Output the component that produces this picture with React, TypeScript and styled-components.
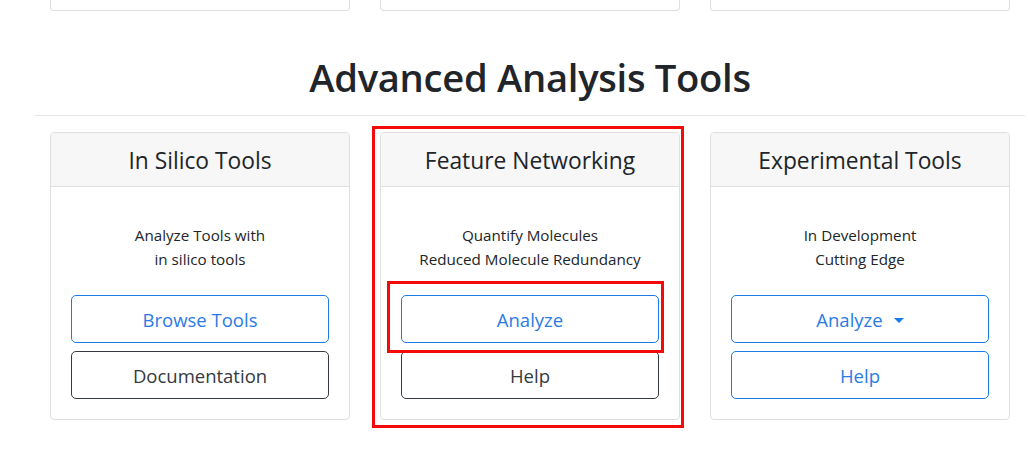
import React from "react";
import styled, { createGlobalStyle, css } from "styled-components";

const Global = createGlobalStyle`
  html, body { margin: 0; padding: 0; background: #fff; }
  body {
    font-family: "Open Sans", "Noto Sans", "Liberation Sans", sans-serif;
    color: #212529;
    -webkit-font-smoothing: antialiased;
  }
  * { box-sizing: border-box; }
`;

const Page = styled.div`
  width: 1028px;
  height: 451px;
  overflow: hidden;
  position: relative;
`;

const Container = styled.div`
  width: 990px;
  margin-left: 35px;
`;

const Row = styled.div`
  display: grid;
  grid-template-columns: repeat(3, 300px);
  column-gap: 30px;
  padding: 0 15px;
`;

const StubCard = styled.div`
  height: 11px;
  border: 1px solid #dedede;
  border-top: none;
  border-radius: 0 0 4px 4px;
`;

const Title = styled.h2`
  margin: 42px 0 0;
  text-align: center;
  font-size: 38.2px;
  font-weight: 600;
  line-height: 48px;
  color: #212529;
  letter-spacing: -0.3px;
`;

const Rule = styled.hr`
  margin: 14px 0 16px;
  border: 0;
  border-top: 1px solid #e2e2e2;
`;

const CardWrap = styled.div`
  position: relative;
`;

const Card = styled.div`
  border: 1px solid #dfdfdf;
  border-radius: 4px;
  background: #fff;
  display: flex;
  flex-direction: column;
`;

const CardHeader = styled.div`
  height: 54px;
  padding-top: 2px;
  background: #f7f7f7;
  border-bottom: 1px solid #dfdfdf;
  border-radius: 3px 3px 0 0;
  display: flex;
  align-items: center;
  justify-content: center;
  font-size: 22.8px;
  font-weight: 400;
  color: #212529;
`;

const CardBody = styled.div`
  padding: 36px 20px 20px;
  display: flex;
  flex-direction: column;
  gap: 8px;
`;

const CardText = styled.p`
  margin: 0 0 16px;
  text-align: center;
  font-size: 15.2px;
  line-height: 24px;
  color: #212529;
`;

const Button = styled.button<{ $variant: "primary" | "dark" }>`
  height: 48px;
  width: 100%;
  border-radius: 5px;
  background: #fff;
  font-family: inherit;
  font-size: 18.5px;
  display: flex;
  align-items: center;
  justify-content: center;
  cursor: pointer;
  ${(p) =>
    p.$variant === "primary"
      ? css`
          border: 1px solid #1a7ae8;
          color: #2a7be4;
        `
      : css`
          border: 1px solid #343a40;
          color: #343a40;
        `}
`;

const Caret = styled.span`
  display: inline-block;
  margin-left: 11px;
  margin-top: 2px;
  border-top: 5px solid #1a7ae8;
  border-left: 5.5px solid transparent;
  border-right: 5.5px solid transparent;
`;

const Highlight = styled.div<{ $top: number; $left: number; $w: number; $h: number }>`
  position: absolute;
  top: ${(p) => p.$top}px;
  left: ${(p) => p.$left}px;
  width: ${(p) => p.$w}px;
  height: ${(p) => p.$h}px;
  border: 3.5px solid #f50a0a;
  pointer-events: none;
`;

type Tool = {
  title: string;
  lines: string[];
  primary: string;
  caret?: boolean;
  secondary: string;
  secondaryVariant: "primary" | "dark";
  highlight?: boolean;
};

const tools: Tool[] = [
  {
    title: "In Silico Tools",
    lines: ["Analyze Tools with", "in silico tools"],
    primary: "Browse Tools",
    secondary: "Documentation",
    secondaryVariant: "dark",
  },
  {
    title: "Feature Networking",
    lines: ["Quantify Molecules", "Reduced Molecule Redundancy"],
    primary: "Analyze",
    secondary: "Help",
    secondaryVariant: "dark",
    highlight: true,
  },
  {
    title: "Experimental Tools",
    lines: ["In Development", "Cutting Edge"],
    primary: "Analyze",
    caret: true,
    secondary: "Help",
    secondaryVariant: "primary",
  },
];

export default function App() {
  return (
    <Page>
      <Global />
      <Container>
        <Row>
          <StubCard />
          <StubCard />
          <StubCard />
        </Row>
        <Title>Advanced Analysis Tools</Title>
        <Rule />
        <Row>
          {tools.map((t) => (
            <CardWrap key={t.title}>
              <Card>
                <CardHeader>{t.title}</CardHeader>
                <CardBody>
                  <CardText>
                    {t.lines[0]}
                    <br />
                    {t.lines[1]}
                  </CardText>
                  <Button $variant="primary">
                    {t.primary}
                    {t.caret && <Caret />}
                  </Button>
                  <Button $variant={t.secondaryVariant}>{t.secondary}</Button>
                </CardBody>
              </Card>
              {t.highlight && (
                <>
                  <Highlight $top={-6} $left={-8} $w={312} $h={302} />
                  <Highlight $top={149} $left={7} $w={277} $h={72} />
                </>
              )}
            </CardWrap>
          ))}
        </Row>
      </Container>
    </Page>
  );
}
